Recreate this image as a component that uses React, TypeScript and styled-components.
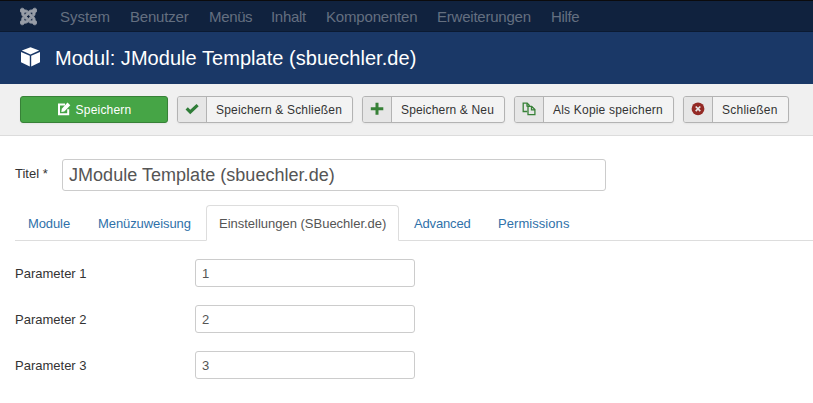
import React from "react";
import styled, { createGlobalStyle } from "styled-components";
import { FaJoomla } from "react-icons/fa";

const GlobalStyle = createGlobalStyle`
  * { box-sizing: border-box; }
  html, body { margin: 0; background: #fff; overflow: hidden; }
  body { font: 13px/18px "Liberation Sans", Arial, sans-serif; color: #333; }
`;

const Page = styled.div`
  width: 813px;
  height: 403px;
  overflow: hidden;
`;

const NavBar = styled.nav`
  display: flex;
  align-items: center;
  height: 32px;
  padding: 2px 0 0 20px;
  background: #10223e;
  border-top: 1px solid #0b0b0d;
  border-bottom: 1px solid #0b1a32;
`;

const NavLogo = styled(FaJoomla)`
  width: 17px;
  height: 19px;
  margin: 0 23px 2px 0;
  flex: none;
  color: #979da7;
  stroke: #979da7;
  stroke-width: 22px;
`;

const NavItem = styled.a<{ $width: number; $spacing: number }>`
  flex: none;
  width: ${(p) => p.$width}px;
  font-size: 15px;
  line-height: 20px;
  white-space: nowrap;
  letter-spacing: ${(p) => p.$spacing}px;
  color: #646f80;
`;

const Header = styled.header`
  display: flex;
  align-items: center;
  height: 52px;
  padding: 0 0 0 20px;
  background: #1a3867;
`;

const CubeIcon = styled.svg`
  width: 21px;
  height: 20px;
  margin: 0 14px 2px 0;
  flex: none;
`;

const PageTitle = styled.h1`
  margin: 0;
  font-size: 20px;
  font-weight: normal;
  line-height: 24px;
  letter-spacing: 0.04px;
  color: #fff;
`;

const Toolbar = styled.div`
  display: flex;
  gap: 9px;
  height: 52px;
  padding: 12px 20px 0;
  background: #f0f0f0;
  border-bottom: 1px solid #dcdcdc;
`;

const BaseButton = styled.button<{ $width: number }>`
  display: flex;
  align-items: center;
  flex: none;
  width: ${(p) => p.$width}px;
  height: 27px;
  padding: 0;
  overflow: hidden;
  font: 12px/25px "Liberation Sans", Arial, sans-serif;
  white-space: nowrap;
  border: 1px solid #b3b3b3;
  border-radius: 3px;
  background: #f3f3f3;
  color: #333;
  box-shadow: 0 1px 2px rgba(0, 0, 0, 0.05);
`;

const PrimaryButton = styled(BaseButton)`
  justify-content: center;
  gap: 5px;
  border-color: #378137;
  background: #46a546;
  color: #fff;
`;

const IconCell = styled.span`
  display: flex;
  align-items: center;
  justify-content: center;
  width: 29px;
  height: 100%;
  margin-right: 9px;
  background: #e6e6e6;
  border-right: 1px solid #b3b3b3;
`;

const ButtonText = styled.span<{ $spacing: number }>`
  padding-top: 1px;
  letter-spacing: ${(p) => p.$spacing}px;
`;

const Glyph = styled.svg`
  width: 14px;
  height: 14px;
  margin-bottom: 1px;
  flex: none;
`;

const Main = styled.main`
  padding-top: 23px;
`;

const TitleRow = styled.div`
  display: flex;
  align-items: center;
  height: 32px;
  padding-left: 15px;
`;

const TitleLabel = styled.label`
  width: 47px;
  padding-bottom: 2px;
`;

const Input = styled.input`
  width: 220px;
  height: 28px;
  padding: 0 6px;
  font: 13px "Liberation Sans", Arial, sans-serif;
  color: #555;
  background: #fff;
  border: 1px solid #ccc;
  border-radius: 3px;
  outline: none;
`;

const TitleInput = styled(Input)`
  width: 544px;
  height: 32px;
  font-size: 18px;
  letter-spacing: 0.03px;
`;

const Tabs = styled.div`
  display: flex;
  gap: 2px;
  height: 36px;
  margin: 14px 0 18px 15px;
  border-bottom: 1px solid #ddd;
`;

const Tab = styled.a<{ $width: number; $active?: boolean; $spacing: number }>`
  flex: none;
  width: ${(p) => p.$width}px;
  height: 36px;
  padding: 9px 0 0 12px;
  white-space: nowrap;
  letter-spacing: ${(p) => p.$spacing}px;
  border: 1px solid ${(p) => (p.$active ? "#ddd" : "transparent")};
  border-bottom: ${(p) => (p.$active ? "1px solid #fff" : "0")};
  border-radius: 4px 4px 0 0;
  color: ${(p) => (p.$active ? "#555" : "#3071a9")};
`;

const Fields = styled.div`
  display: flex;
  flex-direction: column;
  gap: 18px;
  padding-left: 15px;
`;

const FieldRow = styled.div`
  display: flex;
  align-items: center;
  height: 28px;
`;

const FieldLabel = styled.label`
  width: 180px;
  padding-top: 1px;
`;

const NAV = [
  { label: "System", width: 70, spacing: 0 },
  { label: "Benutzer", width: 79, spacing: -0.2 },
  { label: "Menüs", width: 62, spacing: -0.35 },
  { label: "Inhalt", width: 55, spacing: -0.3 },
  { label: "Komponenten", width: 111, spacing: -0.18 },
  { label: "Erweiterungen", width: 114, spacing: -0.22 },
  { label: "Hilfe", width: 40, spacing: -0.35 },
];

const TABS = [
  { label: "Module", width: 68, spacing: -0.1 },
  { label: "Menüzuweisung", width: 119, spacing: -0.08 },
  { label: "Einstellungen (SBuechler.de)", width: 193, spacing: -0.01, active: true },
  { label: "Advanced", width: 82, spacing: -0.15 },
  { label: "Permissions", width: 98, spacing: 0.06 },
];

const EditGlyph = () => (
  <Glyph viewBox="0 0 14 14">
    <path d="M8 2.400H2v9.800h9.200V7.300" fill="none" stroke="#fff" strokeWidth="2" />
    <path d="M4.300 9.900l.5-3.200L10.500.6l2.800 2.600-6 6.200z" fill="#fff" />
  </Glyph>
);
const CheckGlyph = () => (
  <Glyph viewBox="0 0 14 14">
    <path d="M1.700 6.300l3.600 3.700 7.300-6.800" fill="none" stroke="#2f7d38" strokeWidth="3.200" />
  </Glyph>
);
const PlusGlyph = () => (
  <Glyph viewBox="0 0 14 14">
    <path d="M5.500.8h3v4.500H13.300v3H8.500V12.800h-3V8.300H.8v-3h4.700z" fill="#378137" />
  </Glyph>
);
const CopyGlyph = () => (
  <Glyph viewBox="0 0 14 14" fill="none" stroke="#378137" strokeWidth="1.300">
    <path d="M5.300 9.500H1.200V1.200h4L7.700 3.700" />
    <path d="M5 1.200v3h2.500M6 4.400h3.700l3.200 3.200v5H6zM9.500 4.600v3.200h3.300" />
  </Glyph>
);
const CancelGlyph = () => (
  <Glyph viewBox="0 0 14 14">
    <circle cx="7" cy="6.800" r="6.400" fill="#942a25" />
    <path d="M4.700 4.500l4.600 4.600M9.300 4.500L4.700 9.100" stroke="#e6e6e6" strokeWidth="1.700" />
  </Glyph>
);

const ACTIONS = [
  { label: "Speichern & Schließen", width: 176, spacing: 0.19, icon: <CheckGlyph /> },
  { label: "Speichern & Neu", width: 143, spacing: 0.15, icon: <PlusGlyph /> },
  { label: "Als Kopie speichern", width: 160, spacing: 0.2, icon: <CopyGlyph /> },
  { label: "Schließen", width: 106, spacing: 0.25, icon: <CancelGlyph /> },
];

export default function App() {
  return (
    <Page>
      <GlobalStyle />
      <NavBar>
        <NavLogo preserveAspectRatio="none" />
        {NAV.map((n) => (
          <NavItem key={n.label} $width={n.width} $spacing={n.spacing}>{n.label}</NavItem>
        ))}
      </NavBar>
      <Header>
        <CubeIcon viewBox="0 0 21 20" fill="#fff">
          <path d="M10.500.3L19.200 3.600 10.500 7.500 1.800 3.600zM1 5L9.800 8.700V19.400L1 15.200zM20 5L11.200 8.700V19.400L20 15.200z" />
        </CubeIcon>
        <PageTitle>Modul: JModule Template (sbuechler.de)</PageTitle>
      </Header>
      <Toolbar>
        <PrimaryButton $width={148}>
          <EditGlyph />
          <ButtonText $spacing={0.2}>Speichern</ButtonText>
        </PrimaryButton>
        {ACTIONS.map((a) => (
          <BaseButton key={a.label} $width={a.width}>
            <IconCell>{a.icon}</IconCell>
            <ButtonText $spacing={a.spacing}>{a.label}</ButtonText>
          </BaseButton>
        ))}
      </Toolbar>
      <Main>
        <TitleRow>
          <TitleLabel>Titel *</TitleLabel>
          <TitleInput defaultValue="JModule Template (sbuechler.de)" />
        </TitleRow>
        <Tabs>
          {TABS.map((t) => (
            <Tab key={t.label} $width={t.width} $active={t.active} $spacing={t.spacing}>{t.label}</Tab>
          ))}
        </Tabs>
        <Fields>
          {["1", "2", "3"].map((n) => (
            <FieldRow key={n}>
              <FieldLabel>Parameter {n}</FieldLabel>
              <Input defaultValue={n} />
            </FieldRow>
          ))}
        </Fields>
      </Main>
    </Page>
  );
}
